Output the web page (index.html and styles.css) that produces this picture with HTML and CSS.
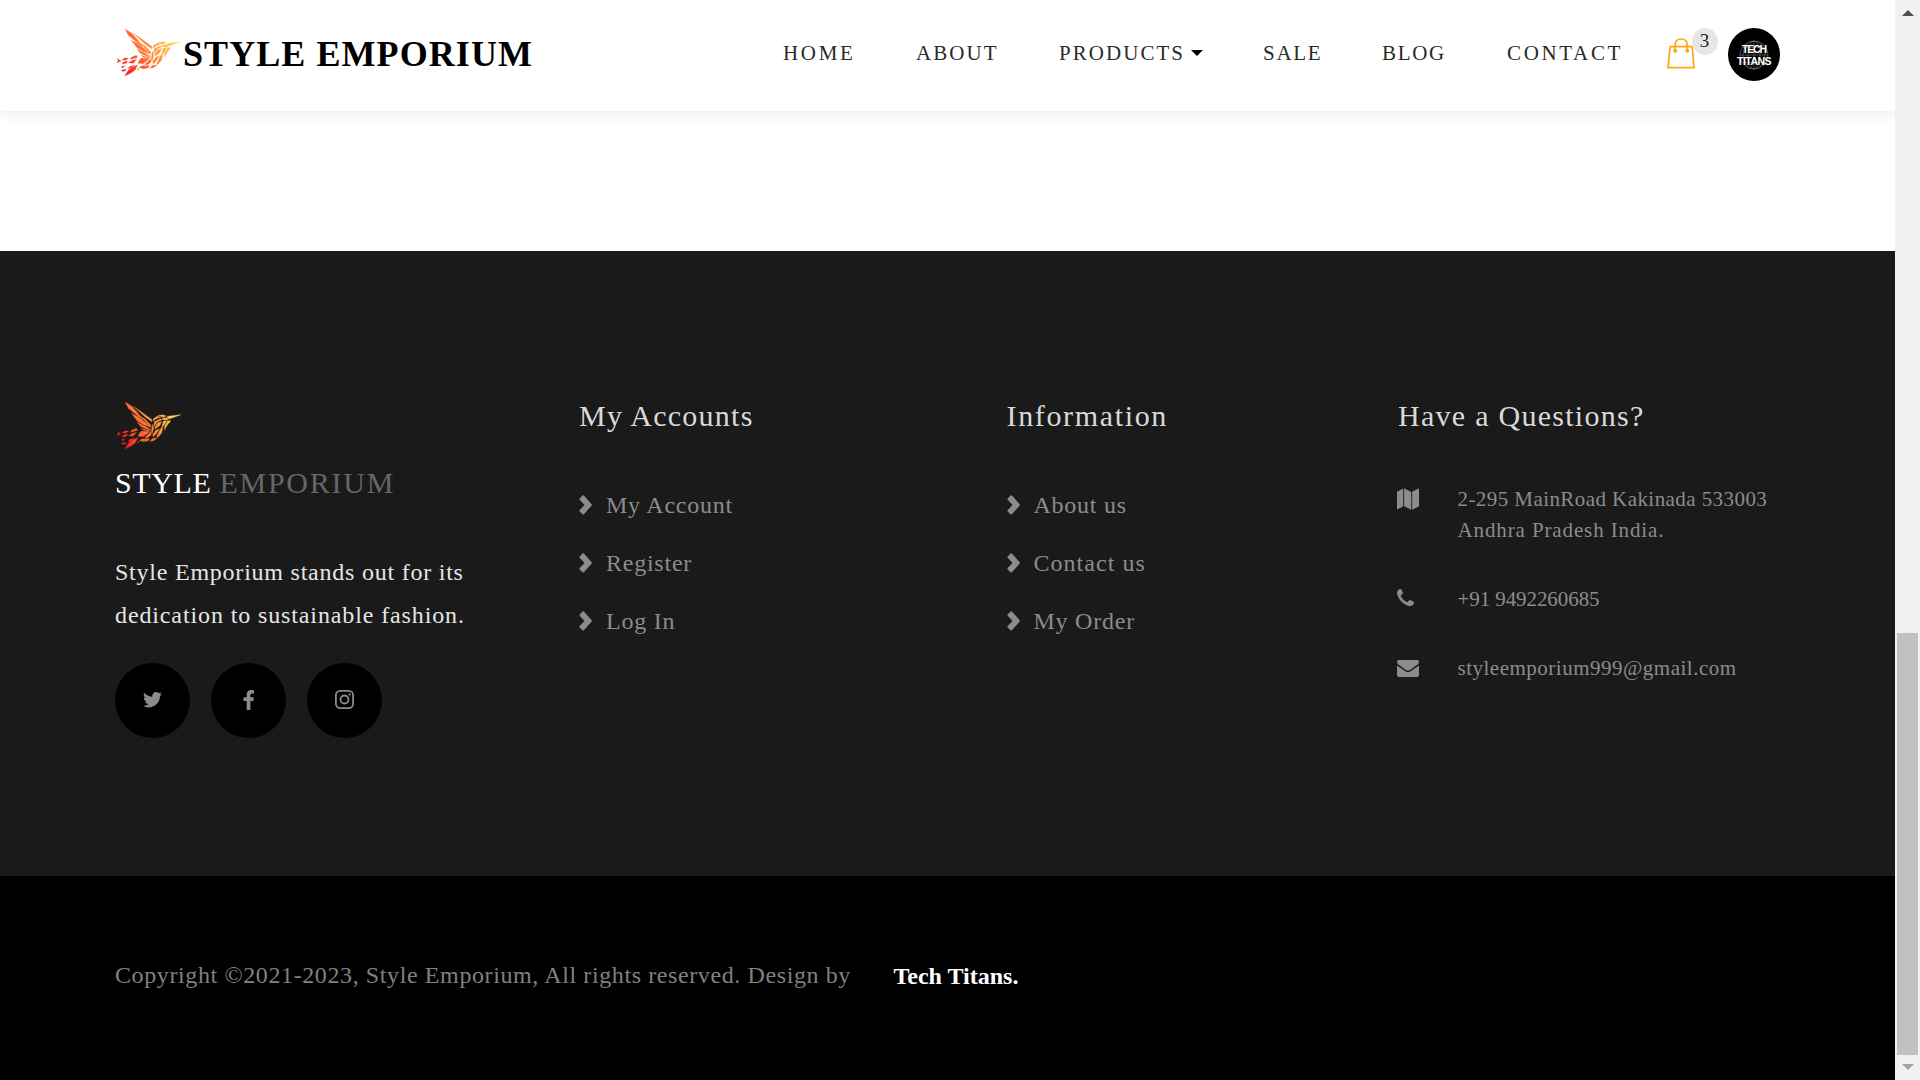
FILE: index.html
```html
<!DOCTYPE html>
<html lang="en">
<head>
<meta charset="utf-8">
<title>Style Emporium</title>
<link rel="stylesheet" href="styles.css">
</head>
<body>
<svg class="defs" width="0" height="0" aria-hidden="true">
  <defs>
    <linearGradient id="flame" gradientUnits="userSpaceOnUse" x1="15" y1="130" x2="165" y2="30">
      <stop offset="0" stop-color="#f5141c"/>
      <stop offset=".4" stop-color="#ff6430"/>
      <stop offset=".7" stop-color="#ff9c3e"/>
      <stop offset="1" stop-color="#fbdc5c"/>
    </linearGradient>
    <symbol id="bird" viewBox="0 0 192 141">
      <g fill="url(#flame)" stroke="url(#flame)" stroke-width=".8">
        <path d="M24 0 44 12 62 32 77 53 50 32 34 19Z"/>
        <path d="M49 13 67 25 104 52 105 60 83 44Z"/>
        <path d="M43 34 61 43 83 59 98 75 81 69 60 56Z"/>
        <path d="M64 39 84 51 102 70 100 76 82 55Z"/>
        <path d="M60 60 78 70 99 80 86 80 70 73Z"/>
        <path d="M72 78 86 83 103 82 94 88 80 85Z"/>
        <path d="M109 50 120 43 132 45 118 50 108 58Z"/>
        <path d="M122 41 137 38 148 42 139 45Z"/>
        <path d="M148 45 157 42 192 38 171 46 157 51Z"/>
        <path d="M135 47 150 48 154 53 141 54Z"/>
        <path d="M112 59 129 51 138 51 120 61 111 74Z"/>
        <path d="M139 57 149 56 143 68 133 78Z"/>
        <path d="M152 56 162 56 153 67 145 79 144 86 142 74Z"/>
        <path d="M122 63 134 58 129 70 114 82 114 75Z"/>
        <path d="M130 80 138 76 134 93 124 105 118 106Z"/>
        <path d="M116 85 127 80 119 94 109 105 107 98Z"/>
        <path d="M104 76 108 66 110 80 105 96Z"/>
        <path d="M73 87 98 89 78 104 63 103 67 94Z"/>
        <path d="M100 91 104 84 102 100 91 108 83 106Z"/>
        <path d="M76 110 98 110 93 117 78 119 66 115Z"/>
        <path d="M107 109 120 108 110 116 98 118Z"/>
        <path d="M62 85 58 79 45 84 39 91 53 88Z"/>
        <path d="M59 91 46 94 34 101 49 103Z"/>
        <path d="M35 87 24 87 15 92 25 94Z"/>
        <path d="M32 96 19 99 16 105 28 103Z"/>
        <path d="M1 88 7 93 12 96 6 98 0 102 4 94Z"/>
        <path d="M62 107 55 122 42 132 23 141 33 125 43 116Z"/>
        <path d="M52 109 37 113 33 119 46 115Z"/>
        <path d="M24 110 13 113 17 117Z"/>
        <path d="M27 121 13 124 15 127 25 126Z"/>
        <path d="M65 118 60 121 64 123Z"/>
      </g>
    </symbol>
    <symbol id="chevron" viewBox="0 0 13 20"><path d="M.7 3.400 3.500.6Q4.200 0 4.900.6L12.700 9.200Q13.200 9.800 12.700 10.500L4.900 19.200Q4.200 19.800 3.500 19.200L.7 16.500Q0 15.800.7 15.100L5.500 9.900.7 4.800Q0 4.100.7 3.400Z" fill="currentColor"/></symbol>
  </defs>
</svg>

<div class="page">
  <header class="header">
    <a class="brand"><svg class="bird"><use href="#bird"/></svg><span>STYLE EMPORIUM</span></a>
    <nav class="nav">
      <a class="wider">HOME</a>
      <a>ABOUT</a>
      <a class="dropdown">PRODUCTS<i class="caret"></i></a>
      <a class="tight">SALE</a>
      <a class="tight">BLOG</a>
      <a class="wider">CONTACT</a>
    </nav>
    <div class="cart">
      <svg width="28" height="31" viewBox="0 0 28 31" fill="none" stroke="#ffa713" stroke-width="1.7">
        <path d="M3.2 8.7H25.2L27 29.6H1Z"/>
        <path d="M8.2 12.5V7Q8.2 1 14.2 1T20.2 7V12.5"/>
        <circle cx="8.2" cy="12.7" r="1.2"/><circle cx="20.2" cy="12.7" r="1.2"/>
      </svg>
      <span class="badge">3</span>
    </div>
    <div class="avatar">
      <svg class="globe" width="30" height="30" viewBox="0 0 30 30" fill="none" stroke="#686868" stroke-width=".7">
        <circle cx="15" cy="15" r="14"/><ellipse cx="15" cy="15" rx="6" ry="14"/><ellipse cx="15" cy="15" rx="11" ry="14"/><path d="M15 1V29M3 7.5H27M1 15H29M3 22.5H27"/>
      </svg>
      <span class="tech">TECH</span>
      <span class="titans">TITANS</span>
    </div>
  </header>

  <main class="content"></main>

  <footer class="footer">
    <section class="about">
      <svg class="bird"><use href="#bird"/></svg>
      <h2 class="footer-brand"><span>STYLE</span> <span class="dim">EMPORIUM</span></h2>
      <p>Style Emporium stands out for its<br><span class="second">dedication to sustainable fashion.</span></p>
      <div class="social">
        <a><svg width="19" height="16" viewBox="0 0 19 16"><path fill="currentColor" d="M19 1.9Q18.1 3.2 16.9 4.1C17.2 9.5 12.8 15.4 6 15.4Q2.7 15.4 0 13.7 3.200 14 5.700 12.100 3 11.900 2.100 9.400 3.100 9.500 3.800 9.300C1.900 8.900.7 7.300.7 5.400Q1.600 5.900 2.500 5.900C.7 4.700.3 2.500 1.300.7Q4.400 4.400 9.300 4.700C8.500 1.500 12.900-1.700 15.700 1.200Q17 .9 18.200.3 17.700 1.700 16.600 2.400 17.900 2.300 19 1.900Z"/></svg></a>
        <a><svg width="11" height="20" viewBox="0 0 11 20"><path fill="currentColor" d="M11 .2V3.400H9.100Q7.400 3.400 7.400 5V7.300H10.900L10.400 10.900H7.400V20H3.700V10.900H.5V7.300H3.700V4.600C3.700 1.600 5.500 0 8.200 0Q10 0 11 .2Z"/></svg></a>
        <a><svg width="19" height="19" viewBox="0 0 19 19" fill="none" stroke="currentColor" stroke-width="1.8"><rect x=".9" y=".9" width="17.2" height="17.200" rx="4.300"/><circle cx="9.500" cy="9.500" r="4"/><circle cx="14.500" cy="4.500" r="1.150" fill="currentColor" stroke="none"/></svg></a>
      </div>
    </section>

    <section>
      <h3>My Accounts</h3>
      <ul class="links">
        <li><svg><use href="#chevron"/></svg>My Account</li>
        <li><svg><use href="#chevron"/></svg>Register</li>
        <li><svg><use href="#chevron"/></svg>Log In</li>
      </ul>
    </section>

    <section>
      <h3 class="information">Information</h3>
      <ul class="links">
        <li><svg><use href="#chevron"/></svg>About us</li>
        <li class="loose"><svg><use href="#chevron"/></svg>Contact us</li>
        <li><svg><use href="#chevron"/></svg>My Order</li>
      </ul>
    </section>

    <section>
      <h3 class="questions">Have a Questions?</h3>
      <ul class="contact">
        <li>
          <svg width="22" height="22" viewBox="0 0 22 22" fill="currentColor"><path d="M0 3.700 6.200.5V18.300L.7 21.200Q0 21.400 0 20.700ZM7.100.3 14.300 3.900V21.800L7.100 18.200ZM15.200 3.800 21.300.6Q22 .3 22 1V18.300L15.200 21.800Z"/></svg>
          <span>2-295 MainRoad Kakinada 533003<br><span class="region">Andhra Pradesh India.</span></span>
        </li>
        <li>
          <svg width="17" height="17" viewBox="0 0 17 17" fill="currentColor"><path d="M17 13.300Q17 14.800 16.200 15.700 14.300 17.300 12 16.900C6.300 15.500 1.500 10.700.1 5Q-.3 2.700 1.300.8 2.200 0 3.700 0 4.100 0 4.300.5L6 3.700Q6.200 4.300 5.700 4.800L3.900 6.500Q3.700 6.800 3.900 7.200C5.200 9.700 7.300 11.800 9.800 13.100Q10.200 13.300 10.500 13.100L12.200 11.300Q12.700 10.800 13.300 11L16.500 12.700Q17 12.900 17 13.300Z"/></svg>
          <span class="phone">+91 9492260685</span>
        </li>
        <li>
          <svg width="22" height="17" viewBox="0 0 22 17" fill="currentColor"><path d="M0 5.500 8.500 11.300Q11 13.200 13.500 11.300L22 5.500V15Q22 17 20 17H2Q0 17 0 15ZM2 0H20Q22 0 22 1.900 22 3.600 20.400 4.700L13.300 9.700C11.500 11.200 10.500 11.200 8.700 9.700L1.600 4.700Q0 3.500 0 2 0 0 2 0Z"/></svg>
          <span>styleemporium999@gmail.com</span>
        </li>
      </ul>
    </section>
  </footer>

  <div class="copyright">
    <span>Copyright ©2021-2023, Style Emporium, All rights reserved. Design by</span>
    <strong>Tech Titans.</strong>
  </div>
</div>

<div class="scrollbar">
  <i class="arrow-up"></i>
  <i class="thumb"></i>
  <i class="arrow-down"></i>
</div>
</body>
</html>
```
FILE: styles.css
```css
* { box-sizing: border-box; margin: 0; padding: 0; }

body {
  display: flex;
  width: 1920px;
  height: 1080px;
  overflow: hidden;
  background: #fff;
  font-family: "Liberation Serif", "Times New Roman", serif;
}

svg { display: block; flex: none; }
.defs { position: absolute; }

.page { flex: 1; display: flex; flex-direction: column; min-width: 0; overflow: hidden; }

/* header */
.header {
  height: 111px;
  display: flex;
  align-items: center;
  padding: 0 115px 4px 117px;
  box-shadow: 0 2px 14px rgba(0, 0, 0, .09);
  z-index: 1;
}
.brand {
  display: flex;
  align-items: center;
  gap: 2px;
  width: 666px;
  font-size: 36px;
  font-weight: bold;
  letter-spacing: 1.07px;
  color: #000;
}
.bird { width: 64px; height: 47px; }
.brand .bird { margin-bottom: 2px; }
.nav {
  display: grid;
  grid-template-columns: 133px 143px 204px 119px 125px 160px;
  font-size: 21px;
  letter-spacing: 2.05px;
  color: #2a2a2a;
}
.nav .wider { letter-spacing: 2.65px; }
.nav .tight { letter-spacing: 1.7px; }
.dropdown { display: flex; align-items: center; gap: 5.5px; }
.caret {
  border: 6.5px solid transparent;
  border-top-color: #000;
  border-bottom: 0;
  margin-top: -2px;
}
.cart { position: relative; width: 61px; }
.badge {
  position: absolute;
  left: 24.5px;
  top: -10px;
  width: 26px;
  height: 27px;
  border-radius: 50%;
  background: #e6e6e6;
  font-size: 19px;
  line-height: 26px;
  text-align: center;
  color: #222;
}
.avatar {
  position: relative;
  display: flex;
  flex-direction: column;
  align-items: center;
  width: 52px;
  height: 53px;
  margin-top: 2px;
  padding-top: 16px;
  border-radius: 50%;
  background: #000;
  color: #fff;
  font: bold 10.5px/11.500px "Liberation Sans", Arial, sans-serif;
}
.globe { position: absolute; left: 11px; top: 12px; }
.tech, .titans { position: relative; }
.tech { letter-spacing: -1.2px; }
.titans { letter-spacing: -.55px; }

.content { height: 140px; }

/* footer */
.footer {
  height: 625px;
  display: grid;
  grid-template-columns: 464px 427.5px 390.5px 1fr;
  padding: 147px 0 0 115px;
  background: #1a1a1a;
  color: #8c8c8c;
}
.about { padding-top: 4px; }
.about .bird { margin-left: 2px; }
.footer-brand {
  margin-top: 16px;
  font-size: 30px;
  font-weight: normal;
  line-height: 36px;
  letter-spacing: .6px;
  color: #fff;
}
.footer-brand .dim { color: #666; letter-spacing: 1.75px; }
.about p {
  margin-top: 50px;
  font-size: 24px;
  line-height: 43px;
  letter-spacing: .77px;
  color: #e6e6e6;
}
.about .second { letter-spacing: .88px; }
.social { display: flex; gap: 21px; margin-top: 26px; }
.social a {
  display: flex;
  align-items: center;
  justify-content: center;
  width: 75px;
  height: 75px;
  padding-bottom: 2px;
  border-radius: 50%;
  background: #000;
  color: #8c8c8c;
}
h3 {
  font-size: 30px;
  font-weight: normal;
  line-height: 36px;
  letter-spacing: 1.25px;
  color: #d9d9d9;
}
.information { letter-spacing: 1.65px; }
.questions { letter-spacing: 1.27px; padding-left: 1px; }
ul { list-style: none; }
.links { margin-top: 42px; font-size: 24px; letter-spacing: .76px; }
.links li { display: flex; align-items: center; gap: 14px; height: 58px; }
.links .loose { letter-spacing: 1.03px; }
.links svg { width: 13px; height: 20px; }
.contact {
  display: flex;
  flex-direction: column;
  gap: 38px;
  margin-top: 50px;
  font-size: 21px;
  line-height: 31px;
  letter-spacing: .43px;
}
.contact li { display: grid; grid-template-columns: 60.5px 1fr; }
.contact svg { margin-top: 4px; }
.contact li + li svg { margin-top: 5px; }
.contact li:last-child svg { margin-top: 7px; }
.contact li:last-child { letter-spacing: .5px; }
.contact .region { letter-spacing: .88px; }
.contact .phone { letter-spacing: -.08px; }

.copyright {
  flex: 1;
  display: flex;
  align-items: center;
  gap: 42.500px;
  padding: 0 0 6px 115px;
  background: #000;
  color: #808080;
  font-size: 24px;
  letter-spacing: .605px;
}
.copyright strong { color: #fff; letter-spacing: 0; padding-top: 2px; }

/* window scrollbar */
.scrollbar {
  width: 25px;
  display: flex;
  flex-direction: column;
  align-items: center;
  background: #f1f1f1;
}
.arrow-up {
  margin-top: 10px;
  border: 6px solid transparent;
  border-bottom-color: #505050;
  border-top: 0;
}
.thumb { width: 21px; height: 422px; margin-top: 617px; background: #c1c1c1; }
.arrow-down {
  margin-top: 9px;
  border: 6px solid transparent;
  border-top-color: #a3a3a3;
  border-bottom: 0;
}
```
